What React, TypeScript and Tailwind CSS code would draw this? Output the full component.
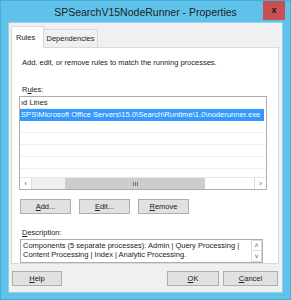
import React from "react"

const font = { fontFamily: '"Liberation Sans", Arial, sans-serif' }

function Btn({ children, className = "" }: { children: React.ReactNode; className?: string }) {
  return (
    <div
      className={`h-[15px] flex items-center justify-center bg-[#e1e1e1] border border-[#adadad] text-[7.5px] leading-none text-[#222] ${className}`}
    >
      {children}
    </div>
  )
}

export default function App() {
  const emptyRows = [0, 1, 2, 3, 4]

  return (
    <div
      className="w-[291px] h-[300px] bg-[#5ec2ea] border border-[#48acd8] flex flex-col overflow-hidden"
      style={font}
    >
      {/* Title bar */}
      <div className="relative h-[21px] shrink-0 flex items-center justify-center">
        <span className="text-[10.5px] text-[#1e1e1e] leading-none mt-[1px]">SPSearchV15NodeRunner - Properties</span>
        <div className="absolute right-[5px] top-[-1px] w-[22px] h-[20px] bg-[#c75050] flex items-center justify-center">
          <span className="text-[9px] font-bold text-[#2a1212] leading-none">x</span>
        </div>
      </div>

      {/* Client area */}
      <div className="mx-[7px] mb-[6px] flex-1 bg-[#f0f0f0] border border-[#93d2ee] flex flex-col">
        {/* Tabs */}
        <div className="mt-[3px] pl-[2px] h-[21px] flex items-end">
          <div className="relative z-10 w-[33px] h-[22px] -mb-px bg-white border border-b-0 border-[#d9d9d9] flex items-center pl-[4px]">
            <span className="text-[7.5px] leading-none text-[#222]">Rules</span>
          </div>
          <div className="w-[54px] h-[18px] bg-[#f0f0f0] border border-l-0 border-b-0 border-[#d9d9d9] flex items-center justify-center">
            <span className="text-[7.5px] leading-none text-[#222]">Dependencies</span>
          </div>
        </div>

        {/* Tab page */}
        <div className="ml-[2px] w-[268px] h-[217px] bg-white border border-[#d9d9d9] flex flex-col overflow-hidden">
          <div className="mt-[10px] pl-[10px] h-[9px] text-[7.5px] leading-[9px] text-[#222]">
            Add, edit, or remove rules to match the running processes.
          </div>

          <div className="mt-[18px] pl-[10px] h-[9px] text-[7.5px] leading-[9px] text-[#222]">
            R<span className="underline">u</span>les:
          </div>

          {/* Rules list */}
          <div className="mt-[2px] ml-[7px] w-[248px] h-[97px] border border-[#abadb3] bg-white flex flex-col overflow-hidden">
            <div className="h-[83px] flex flex-col overflow-hidden">
              <div className="h-[12px] shrink-0 flex items-center border-b border-[#f0f0f0]">
                <span className="ml-[1px] text-[7.6px] leading-none text-[#222] whitespace-nowrap">ıd Lines</span>
              </div>
              <div className="h-[12px] shrink-0 mr-[2px] bg-[#3399ff] flex items-center">
                <span className="ml-[1px] text-[7.6px] leading-none text-white whitespace-nowrap">
                  SPS\Microsoft Office Servers\15.0\Search\Runtime\1.0\noderunner.exe
                </span>
              </div>
              {emptyRows.map((r) => (
                <div key={r} className="h-[12px] shrink-0 border-b border-[#f0f0f0]" />
              ))}
            </div>
            {/* Horizontal scrollbar */}
            <div className="h-[12px] shrink-0 flex bg-[#f0f0f0] border-t border-[#e6e6e6]">
              <div className="w-[12px] bg-white border-r border-[#dcdcdc] flex items-center justify-center text-[8px] leading-none text-[#606060]">
                ‹
              </div>
              <div className="w-[33px]" />
              <div className="w-[140px] bg-[#cdcdcd] flex items-center justify-center gap-[1px]">
                <div className="w-px h-[4px] bg-[#777]" />
                <div className="w-px h-[4px] bg-[#777]" />
                <div className="w-px h-[4px] bg-[#777]" />
              </div>
              <div className="flex-1 bg-white" />
              <div className="w-[12px] bg-white border-l border-[#dcdcdc] flex items-center justify-center text-[8px] leading-none text-[#606060]">
                ›
              </div>
            </div>
          </div>

          {/* Add / Edit / Remove */}
          <div className="mt-[9px] ml-[8px] flex gap-[8px]">
            <Btn className="w-[51px]">
              <span className="underline">A</span>dd...
            </Btn>
            <Btn className="w-[51px]">
              <span className="underline">E</span>dit...
            </Btn>
            <Btn className="w-[51px]">
              <span className="underline">R</span>emove
            </Btn>
          </div>

          <div className="mt-[14px] pl-[10px] h-[9px] text-[7.5px] leading-[9px] text-[#222]">
            <span className="underline">D</span>escription:
          </div>

          {/* Description box */}
          <div className="mt-[2px] ml-[8px] w-[243px] h-[24px] shrink-0 border border-[#abadb3] bg-white flex">
            <div className="flex-1 pl-[2px] pt-[1px] text-[7.5px] leading-[9px] text-[#222]">
              <div className="whitespace-nowrap">Components (5 separate processes): Admin | Query Processing |</div>
              <div className="whitespace-nowrap">Content Processing | Index | Analytic Processing.</div>
            </div>
            <div className="w-[11px] bg-[#f0f0f0] flex flex-col">
              <div className="h-[11px] bg-white border border-[#dcdcdc] flex items-center justify-center text-[7px] leading-none text-[#606060]">
                ˄
              </div>
              <div className="h-[11px] bg-white border border-t-0 border-[#dcdcdc] flex items-center justify-center text-[7px] leading-none text-[#606060]">
                ˅
              </div>
            </div>
          </div>
        </div>

        {/* Dialog buttons */}
        <div className="mt-[7px] flex">
          <Btn className="ml-[3px] w-[50px]">
            <span className="underline">H</span>elp
          </Btn>
          <Btn className="ml-auto w-[52px] border-[#3c8fd0]">
            <span className="underline">O</span>K
          </Btn>
          <Btn className="ml-[4px] mr-[4px] w-[55px]">
            <span className="underline">C</span>ancel
          </Btn>
        </div>
      </div>
    </div>
  )
}
